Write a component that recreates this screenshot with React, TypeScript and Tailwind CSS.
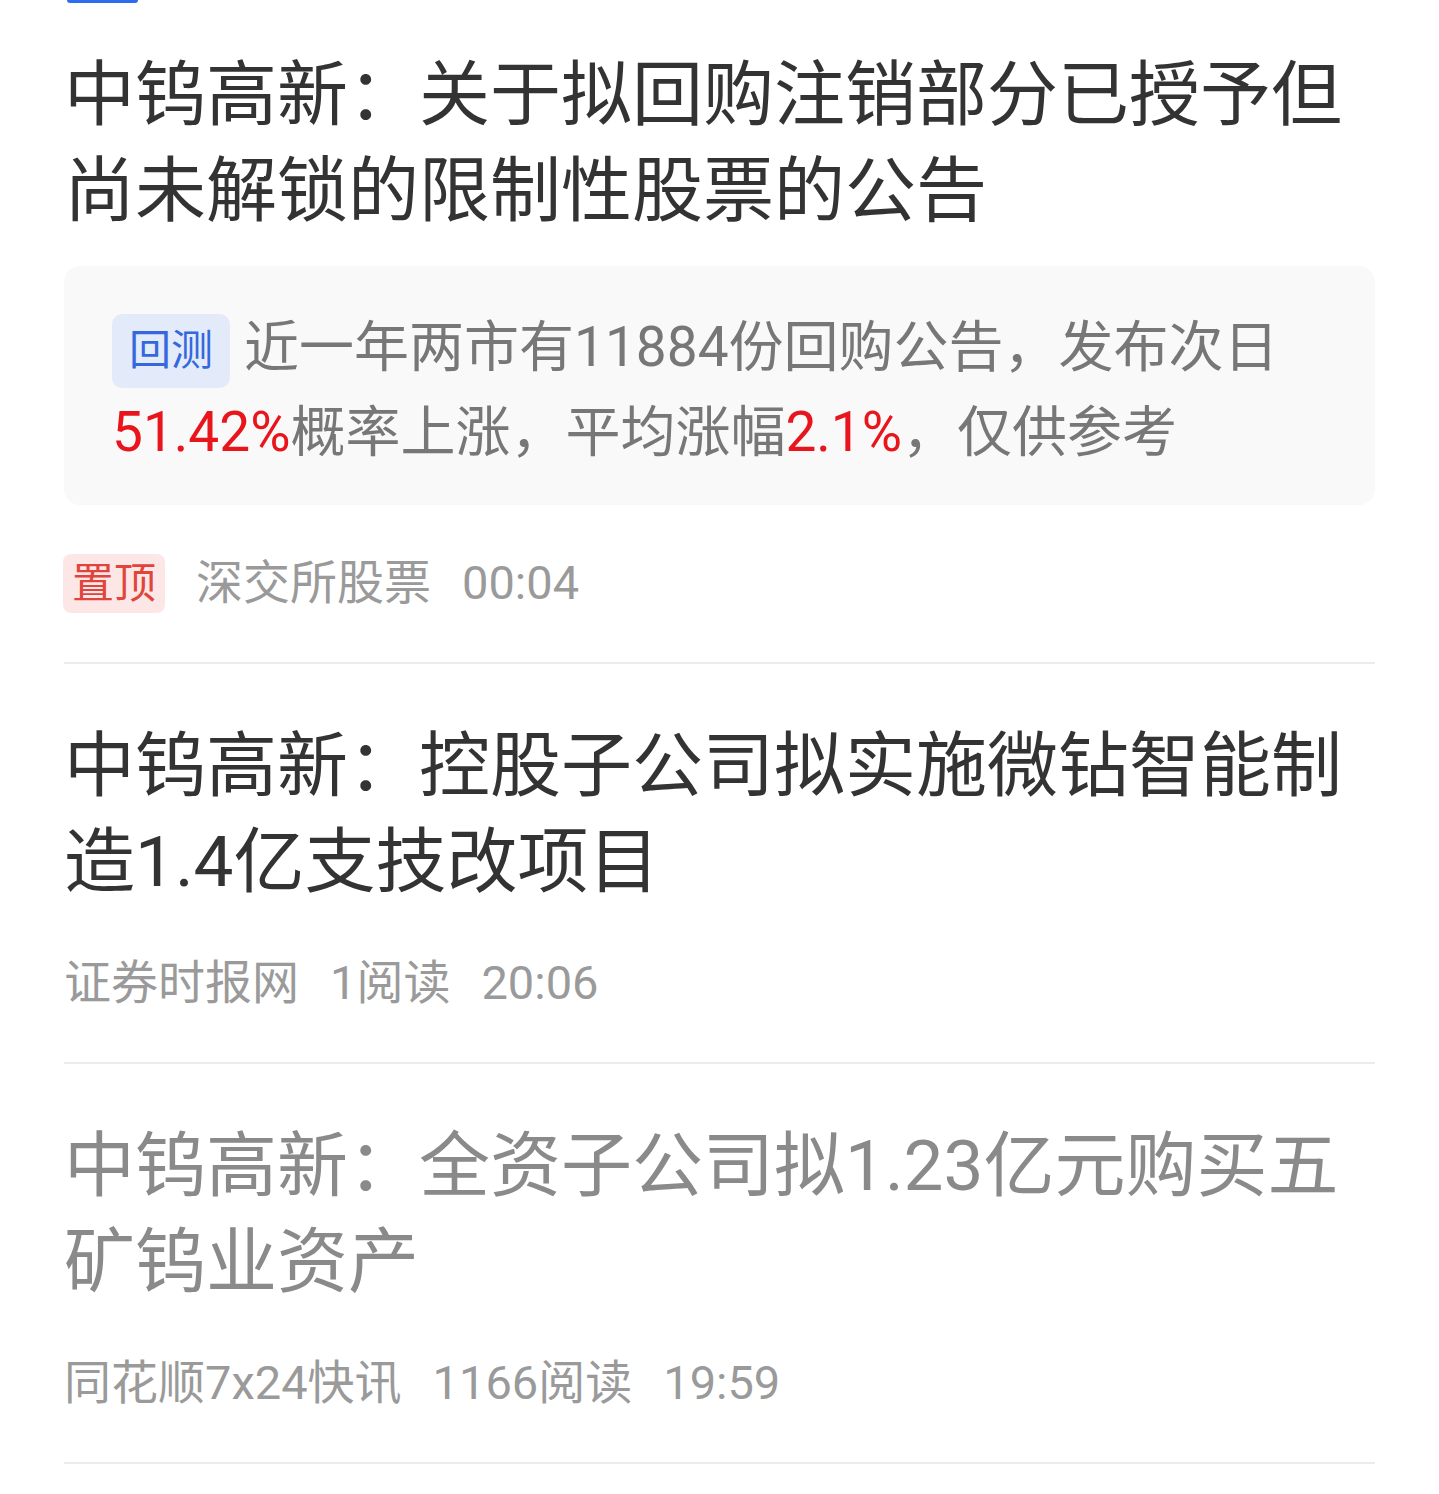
import React from "react";

const font = "font-['Roboto','Noto_Sans_CJK_SC',sans-serif]";

type Item = {
  title: string;
  read?: boolean;
  source: string;
  views?: string;
  time: string;
  pinned?: boolean;
  backtest?: boolean;
};

const items: Item[] = [
  {
    title: "中钨高新：关于拟回购注销部分已授予但尚未解锁的限制性股票的公告",
    source: "深交所股票",
    time: "00:04",
    pinned: true,
    backtest: true,
  },
  {
    title: "中钨高新：控股子公司拟实施微钻智能制造1.4亿支技改项目",
    source: "证券时报网",
    views: "1阅读",
    time: "20:06",
  },
  {
    title: "中钨高新：全资子公司拟1.23亿元购买五矿钨业资产",
    read: true,
    source: "同花顺7x24快讯",
    views: "1166阅读",
    time: "19:59",
  },
];

function BacktestCard() {
  return (
    <div className="mt-[27px] rounded-[16px] bg-[#f9f9f9] px-[48px] pt-[39px] pb-[30px]">
      <p className="text-[55px] leading-[85px] text-[#777777]">
        <span className="mt-[9px] mr-[14px] inline-flex h-[74px] items-center rounded-[10px] bg-[#e3ebfb] px-[17px] align-top text-[42px] leading-none text-[#3468dc]">
          回测
        </span>
        近一年两市有11884份回购公告，发布次日
        <span className="text-[#e8161c]">51.42%</span>
        概率上涨，平均涨幅
        <span className="text-[#e8161c]">2.1%</span>
        ，仅供参考
      </p>
    </div>
  );
}

function NewsRow({ item, first }: { item: Item; first?: boolean }) {
  return (
    <div className={`border-b-2 border-[#ececec] ${first ? "pt-[44px]" : "pt-[54px]"} pb-[49px]`}>
      <h2
        className={`text-[71px] leading-[96px] font-normal ${item.read ? "text-[#8a8a8a]" : "text-[#333333]"}`}
      >
        {item.title}
      </h2>

      {item.backtest && <BacktestCard />}

      <div
        className={`flex h-[59px] items-center gap-[31px] text-[47px] text-[#9a9a9a] ${item.backtest ? "mt-[49px]" : "mt-[44px]"}`}
      >
        {item.pinned && (
          <span className="-ml-px flex h-[59px] items-center rounded-[8px] bg-[#fde7e6] px-[9px] text-[42px] leading-none text-[#e0443b]">
            置顶
          </span>
        )}
        <span>{item.source}</span>
        {item.views && <span>{item.views}</span>}
        <span>{item.time}</span>
      </div>
    </div>
  );
}

export default function App() {
  return (
    <div className={`min-h-[1494px] w-full bg-white ${font}`}>
      <div className="ml-[67px] h-[3px] w-[71px] rounded-b-[6px] bg-[#2d6cf0]" />
      <div className="px-16">
        {items.map((item, i) => (
          <NewsRow key={i} item={item} first={i === 0} />
        ))}
      </div>
    </div>
  );
}
